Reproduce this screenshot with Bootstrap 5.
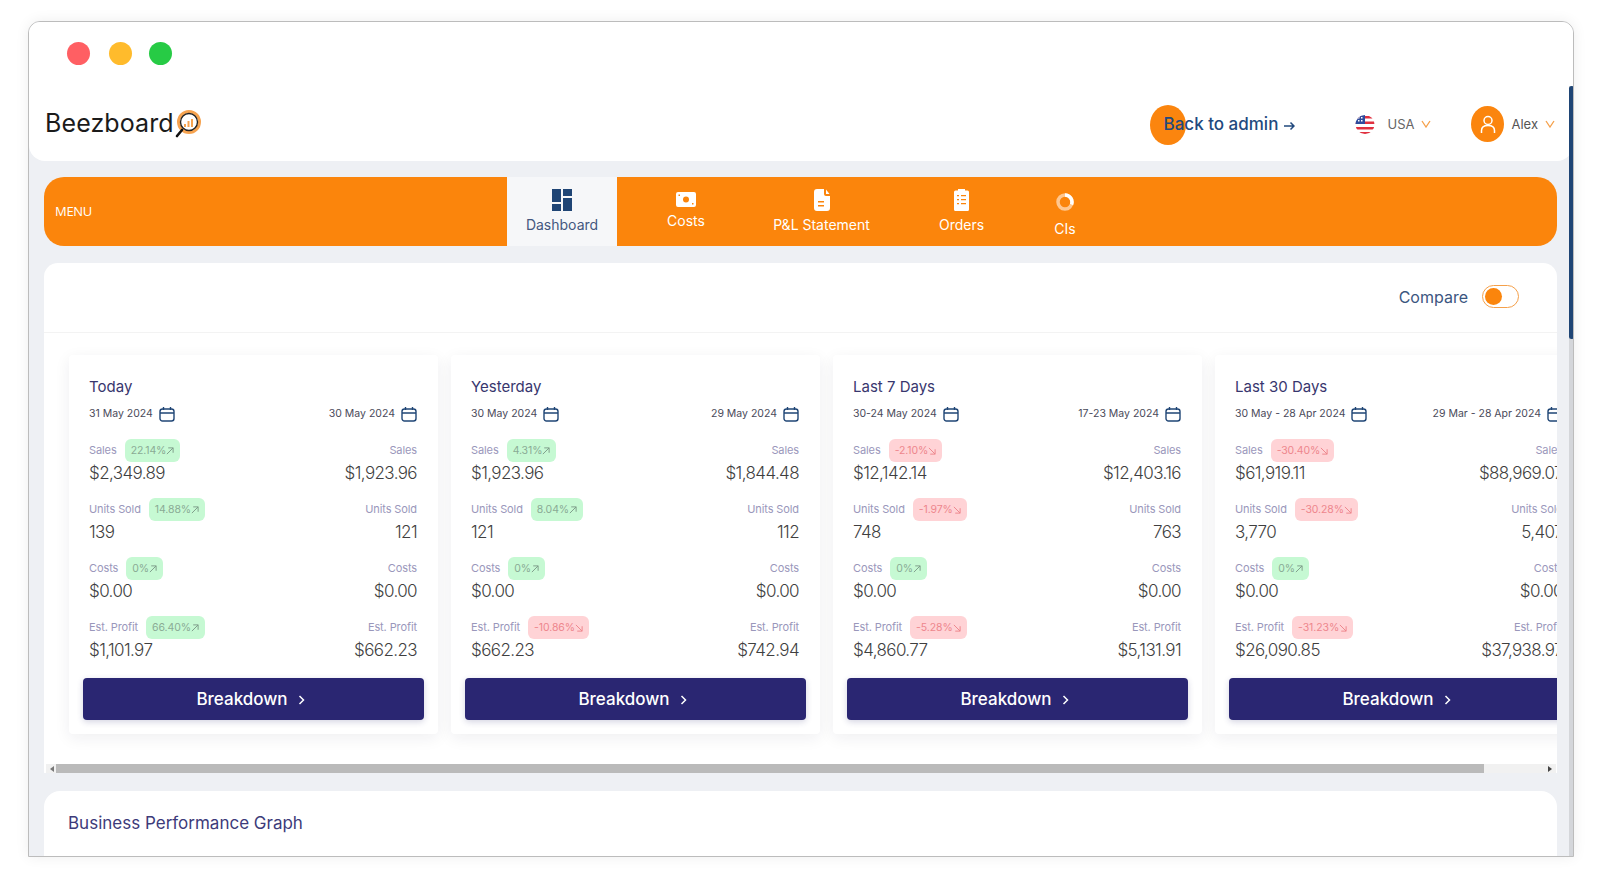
<!DOCTYPE html>
<html lang="en">
<head>
    <meta charset="UTF-8">
    <title>Beezboard</title>
    <link href="https://cdn.jsdelivr.net/npm/bootstrap@5.3.2/dist/css/bootstrap.min.css" rel="stylesheet">
    <style>
        html, body { height: 876px; overflow: hidden; background: #fff; }
        body { font-family: "Inter", "Liberation Sans", sans-serif; padding: 21px 26px 19px 28px; }

        .app-window { position: relative; height: 836px; background: #eef0f4; border: 1px solid #bcbcbc; border-radius: 12px 12px 0 0; overflow: hidden; box-shadow: 0 0 14px rgba(0,0,0,.07); }
        .win-bar { height: 63px; background: #fff; padding: 20px 0 0 38px; }
        .win-dot { width: 23px; height: 23px; border-radius: 50%; }
        .dot-red { background: #ff5f63; margin-right: 19px; }
        .dot-yellow { background: #ffbb2c; margin-right: 17px; }
        .dot-green { background: #27cb45; }

        .top-head { height: 76px; background: #fff; border-radius: 0 0 16px 16px; padding: 0 18px 0 16px; }
        .logo-text { font-size: 25px; letter-spacing: .1px; color: #1b1b1b; line-height: 1; }
        .logo-glass { margin: 2px 0 0 1px; }
        .back-link { position: relative; width: 131px; margin: 4px 60px 0 0; font-size: 17px; font-weight: 500; color: #22497e; white-space: nowrap; }
        .back-blob { position: absolute; left: -14px; top: -7px; width: 36px; height: 40px; border-radius: 50%; background: #fb850e; }
        .back-text { position: relative; }
        .head-gray { margin-top: 2px; font-size: 13px; color: #666; }
        .head-word { margin-top: 2px; }
        .avatar-dot { width: 33px; height: 36px; border-radius: 50%; background: #fb850e; }

        .menu-bar { height: 69px; margin: 16px 16px 0 15px; background: #fb850c; border-radius: 20px; color: #fff; overflow: hidden; }
        .menu-label { width: 463px; padding: 1px 0 0 11px; font-size: 13px; font-family: "Open Sans", sans-serif; letter-spacing: -.3px; }
        .menu-tab { height: 69px; font-size: 14px; text-align: center; }
        .tab-on { width: 110px; background: #f6f7f9; color: #44577f; }
        .tab-icon { display: block; margin: 0 auto; }

        .main-panel { margin: 17px 16px 0 15px; height: 510px; background: #fff; border-radius: 14px 14px 0 0; overflow: hidden; }
        .compare-row { height: 70px; padding: 0 38px 2px 0; border-bottom: 1px solid #f3f3f3; font-size: 16px; color: #3b5680; gap: 14px; }
        .toggle-box { width: 37px; height: 23px; border: 1.5px solid #f5a04a; border-radius: 12px; padding: 2px; }
        .toggle-knob { width: 17px; height: 17px; border-radius: 50%; background: #fb850c; }

        .stat-strip { height: 424px; padding: 22px 0 0 25px; gap: 13px; overflow: hidden; }
        .stat-box { flex: 0 0 369px; height: 379px; padding: 20px 21px 13px 20px; background: #fff; box-shadow: 0 4px 16px rgba(30,30,60,.07); border-radius: 4px; }
        .stat-title { height: 24px; font-size: 15px; line-height: 24px; color: #38366e; }
        .stat-dates { height: 18px; margin: 6px 0 16px; font-size: 10.5px; color: #4a4a5a; }
        .stat-dates span { gap: 6px; }
        .stat-row { height: 47px; margin-bottom: 12px; }
        .stat-row.row-last { margin-bottom: 15px; }
        .stat-label { height: 23px; font-size: 11px; line-height: 23px; letter-spacing: -.1px; color: #9a97bb; gap: 8px; }
        .stat-val { height: 24px; font-size: 17px; line-height: 23px; letter-spacing: -.6px; font-weight: 300; color: #3f3f3f; }
        .pct-pill { height: 23px; padding: 0 6px; border-radius: 6px; font-size: 10.5px; }
        .pct-up { background: #c6f9d3; color: #8aab95; }
        .pct-down { background: #ffd3d6; color: #ee868d; }
        .break-btn { height: 42px; margin: 0 -7px 0 -6px; padding: 2px 6px 0 0; background: #2a2672; border-radius: 4px; color: #fff; font-size: 17px; font-weight: 500; gap: 10px; box-shadow: 0 2px 6px rgba(40,40,110,.2); }
        .break-btn:hover { background: #2a2672; color: #fff; }

        .h-scroll { height: 9px; margin: 7px 1px 0 2px; background: #f1f1f1; padding: 0 4px; }
        .h-thumb { width: 1428px; height: 9px; margin-left: 2px; background: #bababa; }
        .tri-left { border-right: 4px solid #777; border-top: 3px solid transparent; border-bottom: 3px solid transparent; }
        .tri-right { border-left: 4px solid #444; border-top: 3px solid transparent; border-bottom: 3px solid transparent; }

        .graph-panel { margin: 18px 16px 0 15px; height: 80px; padding: 20px 24px; background: #fff; border-radius: 16px 16px 0 0; font-size: 17px; color: #3d3b7a; }

        .v-scroll { position: absolute; top: 64px; right: -1px; width: 5px; height: 772px; background: #d4d6da; }
        .v-thumb { width: 5px; height: 253px; border-radius: 3px; background: #1f4575; }
    </style>
</head>
<body>

<div class="app-window">
    <div class="win-bar d-flex">
        <div class="win-dot dot-red"></div>
        <div class="win-dot dot-yellow"></div>
        <div class="win-dot dot-green"></div>
    </div>

    <div class="top-head d-flex align-items-center">
        <div class="d-flex align-items-center">
            <span class="logo-text">Beezboard</span>
            <svg class="logo-glass" width="26" height="29" viewBox="0 0 26 29">
                <circle cx="14" cy="12" r="10.500" fill="#fff" stroke="#f6a350" stroke-width="3"/>
                <circle cx="14" cy="12" r="8.500" fill="#fff" stroke="#222" stroke-width="1.400"/>
                <path d="M9 17v-3h2v3zM12.500 17v-6h2v6zM16 17v-8h2v8z" fill="#f6a350"/>
                <path d="M7 20l-5 6" stroke="#111" stroke-width="2.600" stroke-linecap="round"/>
            </svg>
        </div>

        <a class="back-link ms-auto text-decoration-none" href="#">
            <span class="back-blob"></span>
            <span class="back-text">Back to admin</span><svg class="back-text" style="margin-left:5px" width="12" height="10" viewBox="0 0 12 10"><path d="M1 5h10M7.500 1.500L11 5 7.500 8.500" fill="none" stroke="#22497e" stroke-width="1.500"/></svg>
        </a>

        <div class="d-flex align-items-center head-gray" style="margin-right:40px">
            <svg width="20" height="21" viewBox="0 0 20 21" style="margin-right:13px">
                <clipPath id="flagClip"><circle cx="10" cy="10.500" r="9.500"/></clipPath>
                <g clip-path="url(#flagClip)">
                    <rect width="20" height="21" fill="#fff"/>
                    <path d="M0 2h20v2.500H0zM0 7.500h20V10H0zM0 13h20v2.500H0zM0 18h20v3H0z" fill="#e0303f"/>
                    <rect width="10" height="10" fill="#2f4b9c"/>
                    <path d="M3 3h1.500v1.500H3zM6 3h1.500v1.500H6zM3 6h1.500v1.500H3zM6 6h1.500v1.500H6z" fill="#fff"/>
                </g>
            </svg>
            <span class="head-word">USA</span>
            <svg width="10" height="8" viewBox="0 0 10 8" style="margin-left:7px"><path d="M1 1l4 6 4-6" fill="none" stroke="#f5a04a" stroke-width="1.300"/></svg>
        </div>

        <div class="d-flex align-items-center head-gray">
            <div class="avatar-dot d-flex align-items-center justify-content-center">
                <svg width="16" height="19" viewBox="0 0 16 19"><circle cx="8" cy="5.500" r="4" fill="none" stroke="#fff" stroke-width="1.500"/><path d="M1.500 18v-2.500c0-3 2-5 6.500-5s6.500 2 6.500 5V18" fill="none" stroke="#fff" stroke-width="1.500"/></svg>
            </div>
            <span class="head-word" style="margin-left:7px;color:#555">Alex</span>
            <svg width="10" height="8" viewBox="0 0 10 8" style="margin-left:7px"><path d="M1 1l4 6 4-6" fill="none" stroke="#f5a04a" stroke-width="1.300"/></svg>
        </div>
    </div>

    <div class="menu-bar d-flex align-items-center">
        <div class="menu-label">MENU</div>
        <div class="menu-tab tab-on" style="padding-top:12px">
            <svg class="tab-icon" width="20" height="22" viewBox="0 0 20 22"><path d="M0 0h9v13H0zM11 0h9v7h-9zM0 15h9v7H0zM11 9h9v13h-9z" fill="#1f4575"/></svg>
            <div style="margin-top:3px">Dashboard</div>
        </div>
        <div class="menu-tab" style="width:138px;padding-top:15px">
            <svg class="tab-icon" width="20" height="15" viewBox="0 0 20 15"><path fill-rule="evenodd" d="M2 0h16a2 2 0 0 1 2 2v11a2 2 0 0 1-2 2H2a2 2 0 0 1-2-2V2a2 2 0 0 1 2-2zm8 4.500a3 3 0 1 0 0 6 3 3 0 0 0 0-6zM2.500 2.500v1.500H4V2.500zM16 11v1.500h1.500V11z" fill="#fff"/></svg>
            <div style="margin-top:3px">Costs</div>
        </div>
        <div class="menu-tab" style="width:133px;padding-top:12px">
            <svg class="tab-icon" width="16" height="22" viewBox="0 0 16 22"><path fill-rule="evenodd" d="M3 0h7v5a2 2 0 0 0 2 2h4v12a3 3 0 0 1-3 3H3a3 3 0 0 1-3-3V3a3 3 0 0 1 3-3zm1 12v1.500h6V12zm0 4v1.500h6V16zM12 .500L15.500 5H12z" fill="#fff"/></svg>
            <div style="margin-top:3px">P&amp;L Statement</div>
        </div>
        <div class="menu-tab" style="width:147px;padding-top:12px">
            <svg class="tab-icon" width="15" height="22" viewBox="0 0 15 22"><path fill-rule="evenodd" d="M4 0h7v1.500h2.500A1.500 1.500 0 0 1 15 3v17.500a1.500 1.500 0 0 1-1.500 1.500h-12A1.500 1.500 0 0 1 0 20.500V3a1.500 1.500 0 0 1 1.500-1.500H4zM3 6v1.300h2V6zm4 0v1.300h5V6zM3 10v1.300h2V10zm4 0v1.300h5V10zM3 14v1.300h2V14zm4 0v1.300h5V14z" fill="#fff"/></svg>
            <div style="margin-top:3px">Orders</div>
        </div>
        <div class="menu-tab" style="width:60px;padding-top:15px">
            <svg class="tab-icon" width="18" height="20" viewBox="0 0 18 20"><circle cx="9" cy="10" r="7" fill="none" stroke="#ffc78f" stroke-width="3.500"/><path d="M9 3a7 7 0 0 1 6.500 9.500" fill="none" stroke="#fff" stroke-width="3.500"/></svg>
            <div style="margin-top:6px">CIs</div>
        </div>
    </div>

    <div class="main-panel">
        <div class="compare-row d-flex align-items-center justify-content-end">
            <span>Compare</span>
            <div class="toggle-box"><div class="toggle-knob"></div></div>
        </div>

        <div class="stat-strip d-flex" id="statStrip"></div>

        <div class="h-scroll d-flex align-items-center">
            <span class="tri-left"></span>
            <div class="h-thumb"></div>
            <span class="tri-right ms-auto"></span>
        </div>
    </div>

    <div class="graph-panel">Business Performance Graph</div>

    <div class="v-scroll"><div class="v-thumb"></div></div>
</div>

<script src="https://cdn.jsdelivr.net/npm/bootstrap@5.3.2/dist/js/bootstrap.bundle.min.js"></script>
<script>
    const labels = ['Sales', 'Units Sold', 'Costs', 'Est. Profit'];

    const periods = [
        { title: 'Today', from: '31 May 2024', to: '30 May 2024', pct: ['22.14', '14.88', '0', '66.40'],
          now: ['$2,349.89', '139', '$0.00', '$1,101.97'], prev: ['$1,923.96', '121', '$0.00', '$662.23'] },
        { title: 'Yesterday', from: '30 May 2024', to: '29 May 2024', pct: ['4.31', '8.04', '0', '-10.86'],
          now: ['$1,923.96', '121', '$0.00', '$662.23'], prev: ['$1,844.48', '112', '$0.00', '$742.94'] },
        { title: 'Last 7 Days', from: '30-24 May 2024', to: '17-23 May 2024', pct: ['-2.10', '-1.97', '0', '-5.28'],
          now: ['$12,142.14', '748', '$0.00', '$4,860.77'], prev: ['$12,403.16', '763', '$0.00', '$5,131.91'] },
        { title: 'Last 30 Days', from: '30 May - 28 Apr 2024', to: '29 Mar - 28 Apr 2024', pct: ['-30.40', '-30.28', '0', '-31.23'],
          now: ['$61,919.11', '3,770', '$0.00', '$26,090.85'], prev: ['$88,969.07', '5,407', '$0.00', '$37,938.97'] }
    ];

    const calIcon = `<svg width="16" height="15" viewBox="0 0 16 15"><rect x="1" y="2" width="14" height="12" rx="2.500" fill="none" stroke="#1f4575" stroke-width="1.400"/><path d="M1 6h14M4.500 0v3M11.500 0v3" stroke="#1f4575" stroke-width="1.400"/></svg>`;

    function arrow(up) {
        const color = up ? '#7f9e8a' : '#ee868d';
        const d = up ? 'M1 8l7-7M2.500 1H8v5.500' : 'M1 1l7 7M2.500 8H8V2.500';
        return `<svg width="8" height="8" viewBox="0 0 9 9"><path d="${d}" fill="none" stroke="${color}" stroke-width="1.100"/></svg>`;
    }

    function statRow(p, i) {
        const up = !p.pct[i].startsWith('-');
        return `<div class="stat-row d-flex justify-content-between ${i === 3 ? 'row-last' : ''}">
            <div>
                <div class="stat-label d-flex">${labels[i]}<span class="pct-pill ${up ? 'pct-up' : 'pct-down'}">${p.pct[i]}%${arrow(up)}</span></div>
                <div class="stat-val">${p.now[i]}</div>
            </div>
            <div class="text-end">
                <div class="stat-label">${labels[i]}</div>
                <div class="stat-val">${p.prev[i]}</div>
            </div>
        </div>`;
    }

    document.getElementById('statStrip').innerHTML = periods.map(p => `
        <div class="stat-box">
            <div class="stat-title">${p.title}</div>
            <div class="stat-dates d-flex justify-content-between">
                <span class="d-flex align-items-center">${p.from} ${calIcon}</span>
                <span class="d-flex align-items-center">${p.to} ${calIcon}</span>
            </div>
            ${labels.map((l, i) => statRow(p, i)).join('')}
            <a href="#" class="btn break-btn d-flex align-items-center justify-content-center">Breakdown
                <svg width="7" height="10" viewBox="0 0 7 10"><path d="M1.500 1l4 4-4 4" fill="none" stroke="#fff" stroke-width="1.500"/></svg>
            </a>
        </div>`).join('');
</script>

</body>
</html>
